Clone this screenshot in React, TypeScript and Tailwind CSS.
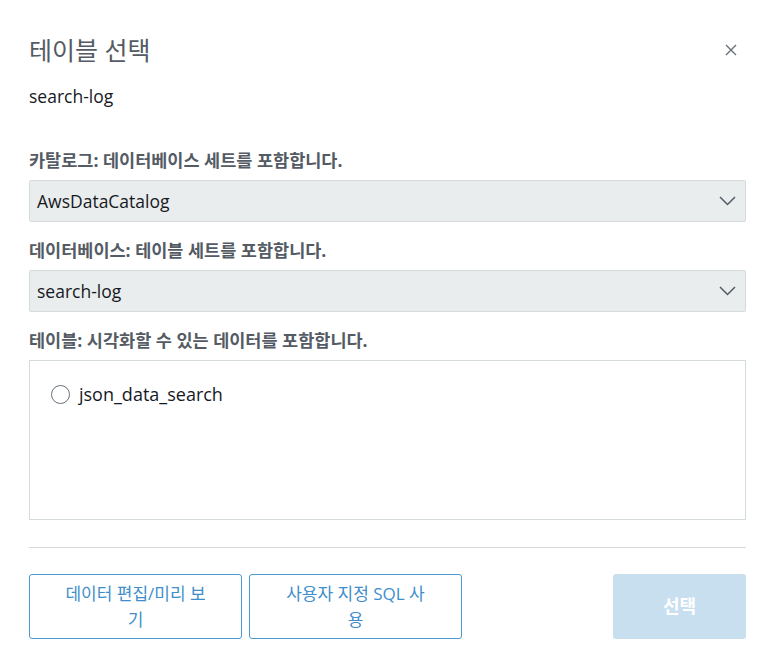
import React from "react";

const FONT = {
  fontFamily: '"Open Sans", "Noto Sans CJK KR", sans-serif',
};

function Chevron() {
  return (
    <svg width="17" height="10" viewBox="0 0 17 10" fill="none">
      <path d="M1 1l7.5 7.5L16 1" stroke="#545b64" strokeWidth="1.5" />
    </svg>
  );
}

function SelectBox({ value }: { value: string }) {
  return (
    <div className="flex h-[42px] items-center justify-between rounded-[2px] border border-[#d5dbdb] bg-[#eaeded] pl-[7px] pr-[9px]">
      <span className="text-[17.5px] text-[#16191f]">{value}</span>
      <Chevron />
    </div>
  );
}

export default function App() {
  return (
    <div className="h-[662px] w-[766px] bg-white pl-[29px] pr-[20px] pt-[34px]" style={FONT}>
      <div className="flex items-center justify-between">
        <h1 className="text-[25px] leading-[32px] text-[#545b64]">테이블 선택</h1>
        <svg width="12" height="12" viewBox="0 0 12 12" className="mr-[9px]">
          <path d="M1 1l10 10M11 1L1 11" stroke="#687078" strokeWidth="1.4" />
        </svg>
      </div>
      <div className="mt-[19px] text-[17.5px] leading-[22px] text-[#16191f]">search-log</div>

      <div className="mt-[42px] text-[17.5px] font-bold leading-[22px] text-[#545b64]">
        카탈로그: 데이터베이스 세트를 포함합니다.
      </div>
      <div className="mt-[9px]">
        <SelectBox value="AwsDataCatalog" />
      </div>

      <div className="mt-[17px] text-[17.5px] font-bold leading-[22px] text-[#545b64]">
        데이터베이스: 테이블 세트를 포함합니다.
      </div>
      <div className="mt-[9px]">
        <SelectBox value="search-log" />
      </div>

      <div className="mt-[17px] text-[17.5px] font-bold leading-[22px] text-[#545b64]">
        테이블: 시각화할 수 있는 데이터를 포함합니다.
      </div>
      <div className="mt-[9px] h-[160px] border border-[#d5dbdb] bg-white px-[21px] pt-[20px]">
        <label className="flex items-center gap-[9px]">
          <span className="h-[19px] w-[19px] rounded-full border border-[#687078] bg-white" />
          <span className="text-[18px] text-[#16191f]">json_data_search</span>
        </label>
      </div>

      <div className="mt-[27px] border-t border-[#d5dbdb]" />

      <div className="mt-[26px] flex items-center">
        <button className="h-[65px] w-[213px] rounded-[3px] border border-[#4a9ad4] px-[31px] text-[17px] leading-[26px] text-[#3f8ecb]">
          데이터 편집/미리 보기
        </button>
        <button className="ml-[7px] h-[65px] w-[213px] rounded-[3px] border border-[#4a9ad4] px-[31px] text-[17px] leading-[26px] text-[#3f8ecb]">
          사용자 지정 SQL 사용
        </button>
        <div className="flex-1" />
        <button className="h-[65px] w-[133px] rounded-[3px] bg-[#c8dff0] text-[18px] font-bold text-white">
          선택
        </button>
      </div>
    </div>
  );
}
